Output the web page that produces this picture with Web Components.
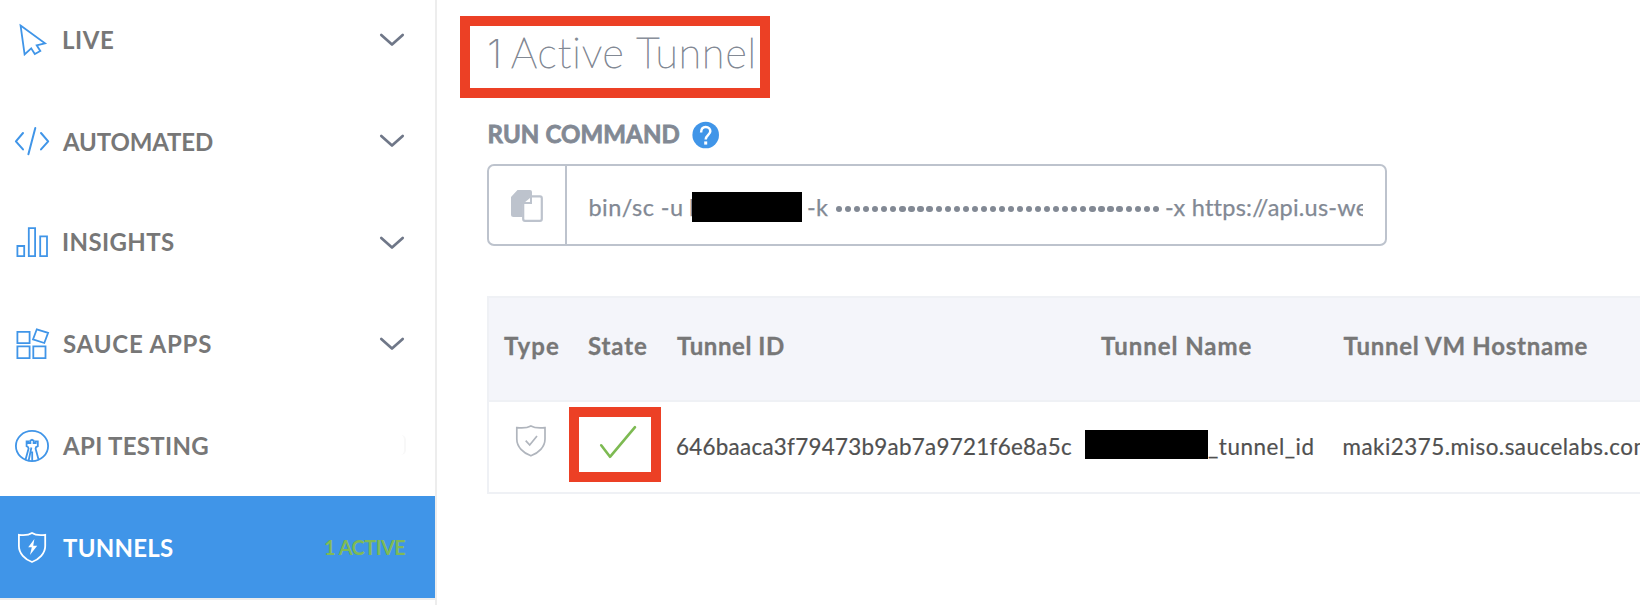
<!DOCTYPE html>
<html lang="en">
<head>
<meta charset="utf-8">
<title>Tunnels</title>
<style>
html, body { margin: 0; height: 605px; overflow: hidden; background: #fff; font-family: Lato, "Open Sans", sans-serif; }
</style>
</head>
<body>
<tunnels-app></tunnels-app>
<script>
function define(name, html, setup) {
  const t = document.createElement('template');
  t.innerHTML = html.trim();
  customElements.define(name, class extends HTMLElement {
    constructor() {
      super();
      this.attachShadow({ mode: 'open' }).append(t.content.cloneNode(true));
    }
    connectedCallback() { if (setup) setup(this, this.shadowRoot); }
  });
}

// One line of text, tracked so that its ink fills the width in "w".
define('text-line', `
<style>:host { display: block; flex: none; white-space: pre; font-variant-ligatures: none; }</style><slot></slot>`,
(el) => {
  const s = getComputedStyle(el);
  const ctx = document.createElement('canvas').getContext('2d');
  ctx.font = s.fontWeight + ' ' + s.fontSize + ' ' + s.fontFamily;
  const text = el.textContent;
  const m = ctx.measureText(text);
  const ink = m.actualBoundingBoxLeft + m.actualBoundingBoxRight;
  const w = Number(el.getAttribute('w'));
  el.style.width = w + 'px';
  el.style.textIndent = m.actualBoundingBoxLeft + 'px';
  if (text.length > 1) el.style.letterSpacing = (w - ink) / (text.length - 1) + 'px';
});

const icons = {
  live: ['12 19 40 40', '<path d="M20.6 25.6 45 43.3 36.7 45.3 40.3 51 34.8 54 31.2 48.3 24.6 54.4Z"/>'],
  automated: ['12 121 40 40', '<path stroke-width="2" stroke-linecap="round" stroke-linejoin="round" d="M23 133 15.9 141.3 23 149.4M35.3 128 28.4 154.3M41 133 48.2 141.3 41 149.4"/>'],
  insights: ['12 221 40 40', '<path d="M17.4 246h6.8v10.2h-6.8zM28.8 228.2h6.3v28h-6.3zM40.2 236.4h6.8v19.8h-6.8z"/>'],
  apps: ['12 323 40 40', '<path d="M17.4 331.8h12.2v11.4h-12.2zM17.4 346.4h12.2v11.7h-12.2zM33.3 346.4h12.2v11.7h-12.2zM36.8 329.3 48.1 332.9 44.3 343 33 339.4Z"/>'],
  api: ['12 425 40 40', '<ellipse cx="32" cy="446" rx="16.1" ry="15.1"/><path stroke-width="1.8" d="M25.5 459.8 28.6 448.6 28 447 26.6 446.2V441.4H28.4V443H30.4V440.6L32 439.8 33.6 440.6V443H35.6V441.4H37.8V446.2L36 447.2 35.6 448.8 38.6 459.8M28.6 460.8 31.4 447.5M32.2 461V451.5"/>'],
  tunnels: ['12 527 40 40', '<path d="M18.9 534.8C24 535.4 29 535 32 533 35 535 40 535.4 45.2 534.8V546C45.2 553.5 39 559.5 32 562 25 559.5 18.9 553.5 18.9 546Z"/><path fill="currentColor" stroke="none" d="M34.4 539 28.2 547.3H31.8L30 555 37.2 545.8H33.2Z"/>'],
  chevron: ['378 30 28 20', '<path stroke-width="2.7" stroke-linecap="round" stroke-linejoin="round" d="M381.3 35 392 44.6 402.7 35"/>'],
  help: ['692 121 28 28', '<circle cx="705.7" cy="135" r="13.3" fill="currentColor" stroke="none"/><path stroke="#fff" stroke-width="2.5" d="M701.1 132.4C701.1 129 703 127 705.8 127 708.7 127 710.3 129 710.3 131.3 710.3 134.8 705.7 135 705.7 139.6"/><path fill="#fff" stroke="none" d="M704.2 141.4h3v3.2h-3z"/>'],
  copy: ['507 186 40 40', '<path fill="currentColor" stroke="none" d="M517.5 190H530Q532 190 532 192V195H527Q522.5 195 522.5 199.5V217H513.5Q511 217 511 214.5V197Z"/><path stroke-width="2.2" stroke-linejoin="round" d="M531.6 196.4H540Q541.8 196.4 541.8 198.2V219Q541.8 220.8 540 220.8H525Q523.2 220.8 523.2 219V204"/><path fill="currentColor" stroke="none" d="M522 195H532V204H522Z"/><path fill="#fff" stroke="none" d="M530 198V202H525.2Z"/>'],
  shield: ['511 421 40 40', '<path stroke-width="1.7" d="M516.8 427.6C522 428.2 527.5 427.9 530.9 425.9 534.3 427.9 539.8 428.2 545 427.6V439C545 447 538.5 453 530.9 455.8 523.3 453 516.8 447 516.8 439Z"/><path stroke-width="1.7" d="M525.7 440.7 529.7 445 537 436"/>'],
  check: ['595 421 46 42', '<path stroke-width="2.6" stroke-linecap="round" stroke-linejoin="round" d="M601.2 445.3 610 456.8 635 427.2"/>']
};
define('ui-icon', `
<style>:host { display: block; flex: none; } svg { display: block; }</style><svg fill="none" stroke="currentColor" stroke-width="1.8"></svg>`,
(el, root) => {
  const [box, body] = icons[el.getAttribute('name')];
  const svg = root.querySelector('svg'), d = box.split(' ');
  svg.setAttribute('viewBox', box);
  svg.setAttribute('width', d[2]);
  svg.setAttribute('height', d[3]);
  svg.innerHTML = body;
});

define('nav-item', `
<style>
:host { display: flex; align-items: center; box-sizing: border-box; height: 102px; padding: 0 29px 0 12px; gap: 11px;
  color: #777; font-size: 24px; font-weight: 700; }
.icon { color: #4095e8; }
:host([active]) { background: #4095e8; color: #fff; }
:host([active]) .icon { color: #fff; }
.end { margin-left: auto; color: #6f7788; }
</style>
<div class="icon"></div><slot></slot><div class="end"><slot name="end"></slot></div>`,
(el, root) => {
  root.querySelector('.icon').innerHTML = '<ui-icon name="' + el.getAttribute('icon') + '"></ui-icon>';
});

define('side-nav', `
<style>
:host { display: block; flex: none; box-sizing: border-box; width: 437px; height: 605px; overflow: hidden; border-right: 2px solid #ededed; }
nav { margin-top: -12px; border-bottom: 2px solid #ededed; }
.live { font-size: 20px; color: #7fba56; }
.blank { width: 75px; height: 20px; border-right: 2px solid #f8f8f8; border-radius: 0 5px 5px 0; }
</style>
<nav>
<nav-item icon="live"><text-line w="50">LIVE</text-line><ui-icon slot="end" name="chevron" style="padding-top:1px"></ui-icon></nav-item>
<nav-item icon="automated"><text-line w="151" style="margin-left:-1px">AUTOMATED</text-line><ui-icon slot="end" name="chevron"></ui-icon></nav-item>
<nav-item icon="insights" style="margin-top:-2px"><text-line w="111">INSIGHTS</text-line><ui-icon slot="end" name="chevron" style="padding-top:3px"></ui-icon></nav-item>
<nav-item icon="apps"><text-line w="149">SAUCE APPS</text-line><ui-icon slot="end" name="chevron" style="padding-top:2px"></ui-icon></nav-item>
<nav-item icon="api"><text-line w="147" style="margin-left:-1px">API TESTING</text-line><div class="blank" slot="end"></div></nav-item>
<nav-item icon="tunnels" active><text-line w="110">TUNNELS</text-line><text-line class="live" slot="end" w="81">1 ACTIVE</text-line></nav-item>
</nav>`);

define('red-frame', `
<style>:host { display: flex; box-sizing: border-box; border: 10px solid #ec4025; }</style><slot></slot>`);

define('command-box', `
<style>
:host { display: flex; box-sizing: border-box; width: 900px; height: 82px; border: 2px solid #bdc3cd; border-radius: 7px; color: #828994; font-size: 23.5px; -webkit-text-stroke: 0.25px #828994; }
.copy { display: flex; align-items: center; justify-content: center; width: 76px; padding-top: 2px; border-right: 2px solid #bdc3cd; color: #bdc3cd; }
.line { display: flex; align-items: center; height: 78px; width: 774px; margin-left: 22px; padding-top: 4px; box-sizing: border-box; overflow: hidden; }
.mask { flex: none; width: 110px; height: 30px; margin: 0 6px 0 0; background: #000; }
.dots { flex: none; display: flex; width: 323px; justify-content: space-between; margin: 0 7px 0 8px; }
.dots i { width: 6.2px; height: 6.2px; border-radius: 50%; background: #828994; margin-top: 4px; }
</style>
<div class="copy"><ui-icon name="copy"></ui-icon></div>
<div class="line"><text-line w="92.5" style="margin-left:0.5px">bin/sc -u</text-line><text-line w="2" style="margin-left:8px">l</text-line><div class="mask"></div><text-line w="20">-k</text-line><div class="dots"></div><text-line w="201">-x https://api.us-we</text-line></div>`,
(el, root) => { root.querySelector('.dots').innerHTML = '<i></i>'.repeat(36); });

define('tunnel-table', `
<style>
:host { display: block; box-sizing: border-box; width: 1200px; height: 198px; border: 2px solid #eff1f5; }
.row { display: grid; grid-template-columns: 80px 108px 408px 258px 330px; align-items: center; }
.head { height: 102px; background: #f4f5fa; border-bottom: 2px solid #eff1f5; font-size: 24px; font-weight: 700; color: #777; -webkit-text-stroke: 0.3px #777; }
.head text-line { margin-top: -7px; }
.body { height: 90px; font-size: 22.4px; color: #505050; -webkit-text-stroke: 0.2px #505050; }
.body text-line { margin-top: -2px; }
.shield { margin: -13px 0 0 22px; color: #b0b5bd; }
red-frame { width: 92px; height: 75px; padding: 4px 0 0 16px; margin-top: -5px; }
red-frame ui-icon { color: #7dba52; }
.name { display: flex; align-items: center; }
.mask { width: 123px; height: 29px; background: #000; margin-bottom: 5px; }
</style>
<div class="row head">
<text-line w="55" style="margin-left:15px">Type</text-line>
<text-line w="59" style="margin-left:19px">State</text-line>
<text-line w="107">Tunnel ID</text-line>
<text-line w="150.5" style="margin-left:16px">Tunnel Name</text-line>
<text-line w="245" style="margin-left:0.5px">Tunnel VM Hostname</text-line>
</div>
<div class="row body">
<ui-icon class="shield" name="shield"></ui-icon>
<red-frame><ui-icon name="check"></ui-icon></red-frame>
<text-line w="395">646baaca3f79473b9ab7a9721f6e8a5c</text-line>
<div class="name"><div class="mask"></div><text-line w="104.5">_tunnel_id</text-line></div>
<text-line w="307" style="margin-left:0.5px">maki2375.miso.saucelabs.com</text-line>
</div>`);

define('tunnels-app', `
<style>
:host { display: flex; width: 1640px; height: 605px; overflow: hidden; background: #fff; }
main { flex: none; width: 1203px; overflow: hidden; padding-top: 16px; box-sizing: border-box; }
red-frame { width: 310px; height: 82px; margin-left: 23px; padding: 1px 0 0 19px; gap: 14px; align-items: baseline; }
.title { font-size: 41px; font-weight: 100; line-height: 52px; color: #828994; -webkit-text-stroke: 0.8px #828994; }
.count { font-family: Inter, sans-serif; font-size: 40px; font-weight: 200; -webkit-text-stroke: 0; }
.label { display: flex; align-items: center; height: 28px; margin: 23px 0 0 51.5px; gap: 12px; font-size: 24px; font-weight: 700; color: #828994; -webkit-text-stroke: 0.8px #828994; }
.label text-line { margin-top: -3px; }
.label ui-icon { color: #4095e8; }
command-box { margin: 15px 0 0 50px; }
tunnel-table { margin: 50px 0 0 50px; }
</style>
<side-nav></side-nav>
<main>
<red-frame><text-line class="title count" w="8">1</text-line><text-line class="title" w="243.5">Active Tunnel</text-line></red-frame>
<div class="label"><text-line w="191">RUN COMMAND</text-line><ui-icon name="help"></ui-icon></div>
<command-box></command-box>
<tunnel-table></tunnel-table>
</main>`);
</script>
</body>
</html>
